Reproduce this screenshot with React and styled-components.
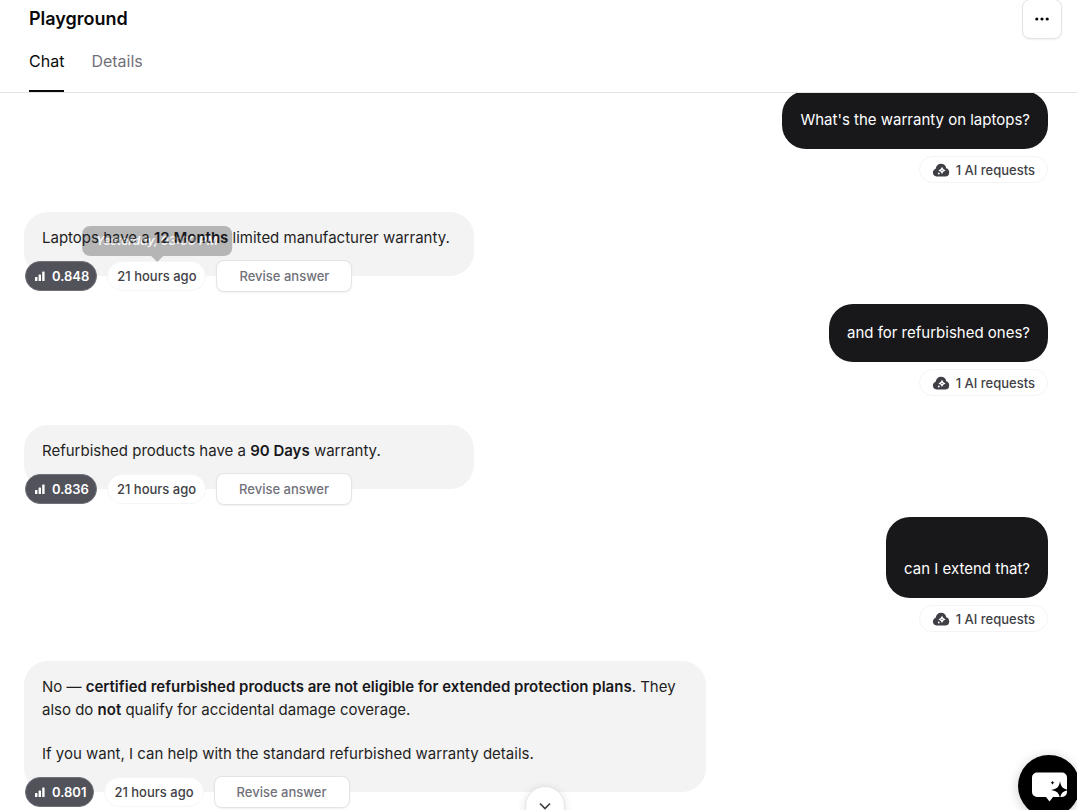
import React from "react";
import styled, { createGlobalStyle } from "styled-components";

const GlobalStyle = createGlobalStyle`
  *, *::before, *::after { box-sizing: border-box; }
  body { margin: 0; background: #fff; color: #1f1f23; font-family: Inter, "Liberation Sans", sans-serif; }
  button { font: inherit; cursor: pointer; }
  p { margin: 0; }
`;

const Page = styled.div`
  display: flex;
  flex-direction: column;
  height: 100vh;
  overflow: hidden;
  position: relative;
`;

const Header = styled.header`
  flex: none;
  border-bottom: 1px solid #e4e4e7;
  padding: 0 15px 0 29px;
`;

const TitleRow = styled.div`
  display: flex;
  justify-content: space-between;
  align-items: center;
  height: 38px;
`;

const Title = styled.h1`
  margin: 0;
  font-size: 18px;
  line-height: 28px;
  font-weight: 600;
  color: #09090b;
`;

const MenuButton = styled.button`
  display: flex;
  align-items: center;
  justify-content: center;
  width: 40px;
  height: 40px;
  padding: 0;
  border: 1px solid #e4e4e7;
  border-radius: 8px;
  background: #fff;
  color: #09090b;
  box-shadow: 0 1px 2px rgba(0, 0, 0, 0.06);
`;

const Tabs = styled.nav`
  display: flex;
  gap: 27px;
`;

const Tab = styled.a`
  height: 54px;
  padding-top: 11px;
  font-size: 16px;
  line-height: 24px;
  color: ${(p) => (p.$active ? "#09090b" : "#71717a")};
  border-bottom: 2px solid ${(p) => (p.$active ? "#09090b" : "transparent")};
  text-decoration: none;
`;

const Scroller = styled.main`
  flex: 1;
  min-height: 0;
  overflow: hidden;
`;

const Thread = styled.div`
  display: flex;
  flex-direction: column;
  margin-top: -2px;
  padding: 0 29px 0 24px;
`;

const Question = styled.section`
  display: flex;
  flex-direction: column;
  align-items: flex-end;
  gap: 7px;
  margin-bottom: 29px;
`;

const QuestionBubble = styled.div`
  padding: 17px 18px 18px;
  border-radius: 24px;
  background: #18181b;
  color: #fff;
  font-size: 15px;
  line-height: 23px;
  white-space: pre-line;
`;

const RequestPill = styled.div`
  display: flex;
  align-items: center;
  gap: 6px;
  height: 27px;
  padding: 0 12px;
  border: 1px solid #f4f4f5;
  border-radius: 14px;
  font-size: 13px;
  line-height: 20px;
  font-weight: 500;
  color: #3f3f46;
`;

const Answer = styled.section`
  display: flex;
  flex-direction: column;
  align-items: flex-start;
  margin-bottom: 12px;
`;

const AnswerBubble = styled.div`
  display: flex;
  flex-direction: column;
  gap: 21px;
  min-width: 450px;
  max-width: 66.6%;
  padding: 14px 18px 27px;
  border-radius: 24px;
  background: #f3f3f3;
  font-size: 15px;
  line-height: 23px;

  strong { font-weight: 600; color: #18181b; }
`;

const Meta = styled.div`
  display: flex;
  align-items: center;
  gap: 10px;
  margin: -16px 0 0 1px;
  font-size: 13px;
  line-height: 20px;
  font-weight: 500;
`;

const Score = styled.button`
  display: flex;
  align-items: center;
  gap: 6px;
  height: 30px;
  padding: 0 7px 0 8px;
  border: 1px solid #71717a;
  border-radius: 15px;
  background: #52525b;
  color: #fff;
  font-weight: 600;
`;

const Time = styled.div`
  position: relative;
  display: flex;
  align-items: center;
  height: 30px;
  padding: 0 9px;
  border: 1px solid #f6f6f7;
  border-radius: 15px;
  background: #fff;
  color: #3f3f46;
`;

const ReviseButton = styled.button`
  height: 32px;
  padding: 0 22px;
  border: 1px solid #e4e4e7;
  border-radius: 8px;
  background: #fff;
  color: #71717a;
  box-shadow: 0 1px 2px rgba(0, 0, 0, 0.06);
`;

const Tooltip = styled.div`
  position: absolute;
  left: 50%;
  bottom: 34px;
  transform: translateX(-50%);
  padding: 5px 14px;
  border-radius: 8px;
  background: #18181b;
  color: #fff;
  font-size: 12px;
  font-style: italic;
  font-weight: 600;
  line-height: 20px;
  white-space: nowrap;
  opacity: 0.28;

  &::after {
    content: "";
    position: absolute;
    top: 100%;
    left: 50%;
    margin-left: -6px;
    border: 6px solid transparent;
    border-top-color: #18181b;
    border-bottom: 0;
  }
`;

const ScrollDown = styled.button`
  position: absolute;
  left: 50%;
  bottom: -16px;
  display: flex;
  align-items: center;
  justify-content: center;
  width: 40px;
  height: 40px;
  margin-left: -14px;
  padding: 0;
  border: 1px solid #e4e4e7;
  border-radius: 50%;
  background: #fff;
  color: #3f3f46;
  box-shadow: 0 2px 10px rgba(0, 0, 0, 0.12);
`;

const Launcher = styled.button`
  position: absolute;
  right: -3px;
  bottom: -7px;
  width: 62px;
  height: 62px;
  padding: 0;
  border: 0;
  border-radius: 50%;
  background: #000;
  box-shadow: 0 2px 12px rgba(0, 0, 0, 0.2);

  svg { display: block; }
`;

const DotsIcon = () => (
  <svg width="16" height="16" viewBox="0 0 16 16" fill="currentColor" aria-hidden="true">
    <circle cx="2.8" cy="8" r="1.6" />
    <circle cx="8" cy="8" r="1.6" />
    <circle cx="13.2" cy="8" r="1.6" />
  </svg>
);

const CloudIcon = () => (
  <svg width="18" height="16" viewBox="0 0 18 16" aria-hidden="true">
    <path
      fill="#3f3f46"
      d="M4.6 14.5A4 4 0 0 1 .9 10.6c0-1.9 1.2-3.3 2.8-3.8A5.3 5.3 0 0 1 9 1.7a5.3 5.3 0 0 1 5.2 4.6 4.2 4.2 0 0 1 3 4.1 4.1 4.1 0 0 1-4.1 4.1z"
    />
    <path fill="#fff" d="M10 4.8l1.3 2.3 2.3 1.3-2.3 1.3-1.300 2.300-1.300-2.300-2.300-1.300 2.300-1.300z" />
    <circle cx="10" cy="8.4" r="0.6" fill="#3f3f46" />
    <circle cx="6.8" cy="11.5" r="0.9" fill="#fff" />
  </svg>
);

const BarsIcon = () => (
  <svg width="12" height="12" viewBox="0 0 12 12" fill="currentColor" aria-hidden="true">
    <rect x="1" y="7" width="2.4" height="4" rx="0.6" />
    <rect x="4.6" y="4.5" width="2.4" height="6.5" rx="0.6" />
    <rect x="8.2" y="1.5" width="2.4" height="9.5" rx="0.6" />
  </svg>
);

const ChevronIcon = () => (
  <svg width="14" height="14" viewBox="0 0 14 14" fill="none" stroke="currentColor" strokeWidth="1.7" aria-hidden="true">
    <path d="M2 4.5l5 5 5-5" />
  </svg>
);

const ChatIcon = () => (
  <svg width="62" height="62" viewBox="0 0 62 62" aria-hidden="true">
    <path
      fill="#fff"
      d="M19 17.5h25a5 5 0 0 1 5 5v14.5a5 5 0 0 1-5 5H35l-3.5 4.5L28 42h-9a5 5 0 0 1-5-5V22.5a5 5 0 0 1 5-5z"
    />
    <path fill="#000" d="M42 26c1 6.2 2.8 8 9 9-6.2 1-8 2.8-9 9-1-6.2-2.8-8-9-9 6.2-1 8-2.8 9-9z" />
    <path fill="#000" d="M34.500 25.500c.3 1.500.7 1.900 2.200 2.200-1.500.3-1.900.7-2.200 2.200-.3-1.500-.7-1.900-2.200-2.200 1.500-.3 1.900-.7 2.200-2.200z" />
  </svg>
);

const thread = [
  {
    question: "What's the warranty on laptops?",
    answer: [<>Laptops have a <strong>12 Months</strong> limited manufacturer warranty.</>],
    score: "0.848",
    tooltip: "Yesterday, 03:00 PM",
  },
  {
    question: "and for refurbished ones?",
    answer: [<>Refurbished products have a <strong>90 Days</strong> warranty.</>],
    score: "0.836",
  },
  {
    question: "\ncan I extend that?",
    answer: [
      <>No — <strong>certified refurbished products are not eligible for extended protection plans</strong>. They also do <strong>not</strong> qualify for accidental damage coverage.</>,
      <>If you want, I can help with the standard refurbished warranty details.</>,
    ],
    score: "0.801",
  },
];

export default function App() {
  return (
    <Page>
      <GlobalStyle />
      <Header>
        <TitleRow>
          <Title>Playground</Title>
          <MenuButton aria-label="More options"><DotsIcon /></MenuButton>
        </TitleRow>
        <Tabs>
          <Tab href="#chat" $active aria-current="page">Chat</Tab>
          <Tab href="#details">Details</Tab>
        </Tabs>
      </Header>
      <Scroller>
        <Thread>
          {thread.map((item) => (
            <React.Fragment key={item.score}>
              <Question>
                <QuestionBubble>{item.question}</QuestionBubble>
                <RequestPill><CloudIcon />1 AI requests</RequestPill>
              </Question>
              <Answer>
                <AnswerBubble>
                  {item.answer.map((text, i) => <p key={i}>{text}</p>)}
                </AnswerBubble>
                <Meta>
                  <Score><BarsIcon />{item.score}</Score>
                  <Time>
                    21 hours ago
                    {item.tooltip && <Tooltip role="tooltip">{item.tooltip}</Tooltip>}
                  </Time>
                  <ReviseButton>Revise answer</ReviseButton>
                </Meta>
              </Answer>
            </React.Fragment>
          ))}
        </Thread>
      </Scroller>
      <ScrollDown aria-label="Scroll to latest"><ChevronIcon /></ScrollDown>
      <Launcher aria-label="Open chat assistant"><ChatIcon /></Launcher>
    </Page>
  );
}
